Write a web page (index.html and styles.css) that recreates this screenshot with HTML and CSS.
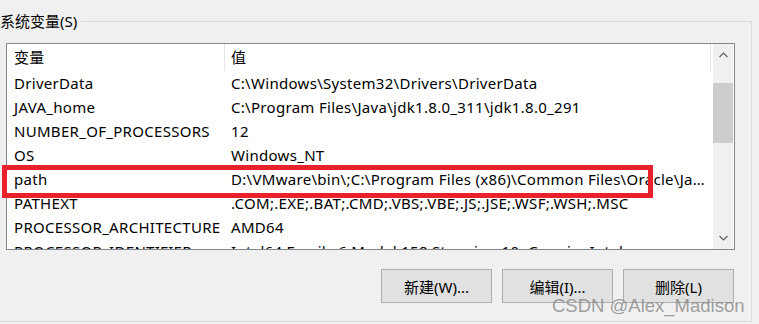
FILE: index.html
```html
<!DOCTYPE html>
<html lang="zh-CN">
<head>
    <meta charset="UTF-8">
    <title>系统变量</title>
    <link rel="stylesheet" href="styles.css">
</head>
<body>
    <fieldset class="group">
        <legend>系统变量(S)</legend>

        <div class="list-wrap">
            <div class="listbox">
                <div class="table">
                    <div class="row head">
                        <div class="cell">变量</div>
                        <div class="cell">值</div>
                    </div>
                    <div class="row"><div class="cell">DriverData</div><div class="cell">C:\Windows\System32\Drivers\DriverData</div></div>
                    <div class="row"><div class="cell">JAVA_home</div><div class="cell">C:\Program Files\Java\jdk1.8.0_311\jdk1.8.0_291</div></div>
                    <div class="row"><div class="cell">NUMBER_OF_PROCESSORS</div><div class="cell">12</div></div>
                    <div class="row"><div class="cell">OS</div><div class="cell">Windows_NT</div></div>
                    <div class="row"><div class="cell">path</div><div class="cell">D:\VMware\bin\;C:\Program Files (x86)\Common Files\Oracle\Java\javapath;C:\Windows\system32</div></div>
                    <div class="row"><div class="cell">PATHEXT</div><div class="cell">.COM;.EXE;.BAT;.CMD;.VBS;.VBE;.JS;.JSE;.WSF;.WSH;.MSC</div></div>
                    <div class="row"><div class="cell">PROCESSOR_ARCHITECTURE</div><div class="cell">AMD64</div></div>
                    <div class="row"><div class="cell">PROCESSOR_IDENTIFIER</div><div class="cell">Intel64 Family 6 Model 158 Stepping 10, GenuineIntel</div></div>
                </div>
                <div class="scrollbar">
                    <div class="arrow">
                        <svg width="9" height="6" viewBox="0 0 9 6"><polyline points="0.5,5 4.5,1 8.5,5" fill="none" stroke="#606060" stroke-width="1.2"/></svg>
                    </div>
                    <div class="track"><div class="thumb"></div></div>
                    <div class="arrow">
                        <svg width="9" height="6" viewBox="0 0 9 6"><polyline points="0.5,1 4.5,5 8.5,1" fill="none" stroke="#606060" stroke-width="1.2"/></svg>
                    </div>
                </div>
            </div>
            <!-- highlight drawn over the path row -->
            <div class="mark"></div>
        </div>

        <div class="buttons">
            <button class="btn">新建(W)...</button>
            <button class="btn">编辑(I)...</button>
            <button class="btn">删除(L)</button>
        </div>
    </fieldset>

    <div class="watermark">CSDN @Alex_Madison</div>
</body>
</html>
```

FILE: styles.css
```css
body {
    margin: 0;
    padding-top: 11px;
    background: #f0f0f0;
    font-family: "Noto Sans", "Noto Sans CJK SC", sans-serif;
    font-size: 15px;
    color: #000;
    overflow: hidden;
    position: relative;
    height: 324px;
    box-sizing: border-box;
}

.group {
    box-sizing: border-box;
    margin: 0 0 0 -10px;
    width: 761px;
    height: 311px;
    border: 1px solid #dcdcdc;
    padding: 12px 16px 0 9px;
}

.group legend {
    padding: 0 4px 0 0;
    line-height: 20px;
}

.list-wrap {
    position: relative;
    margin-left: 6px;
    width: 729px;
}

.listbox {
    box-sizing: border-box;
    height: 207px;
    border: 1px solid #828790;
    background: #fff;
    display: flex;
    overflow: hidden;
}

.table {
    width: 706px;
    overflow: hidden;
    letter-spacing: 0.3px;
}

.row {
    display: grid;
    grid-template-columns: 218px 486px;
    height: 24px;
    line-height: 24px;
}

.row .cell {
    padding-left: 7px;
    white-space: nowrap;
    overflow: hidden;
}

.row .cell + .cell {
    padding-left: 6px;
    padding-right: 6px;
    text-overflow: ellipsis;
}

.row.head {
    height: 27px;
    line-height: 27px;
}

.row.head .cell {
    border-right: 1px solid #e5e5e5;
}

.scrollbar {
    width: 20px;
    background: #f0f0f0;
    display: flex;
    flex-direction: column;
}

.arrow {
    height: 22px;
    display: flex;
    align-items: center;
    justify-content: center;
}

.track {
    flex: 1;
}

.thumb {
    margin-top: 17px;
    height: 60px;
    background: #cdcdcd;
}

.mark {
    position: absolute;
    left: -4px;
    top: 122px;
    width: 641px;
    height: 23px;
    border: 5px solid #e8212b;
}

.buttons {
    display: flex;
    justify-content: flex-end;
    gap: 10px;
    margin-top: 19px;
    width: 734px;
}

.btn {
    box-sizing: border-box;
    width: 111px;
    height: 34px;
    background: #e1e1e1;
    border: 1px solid #adadad;
    font-family: inherit;
    font-size: 15px;
    color: #000;
    padding: 0;
}

.watermark {
    position: absolute;
    left: 552px;
    top: 295px;
    white-space: nowrap;
    font-family: "Liberation Sans", Arial, sans-serif;
    font-size: 18.5px;
    color: rgba(130, 130, 130, 0.75);
}
```
